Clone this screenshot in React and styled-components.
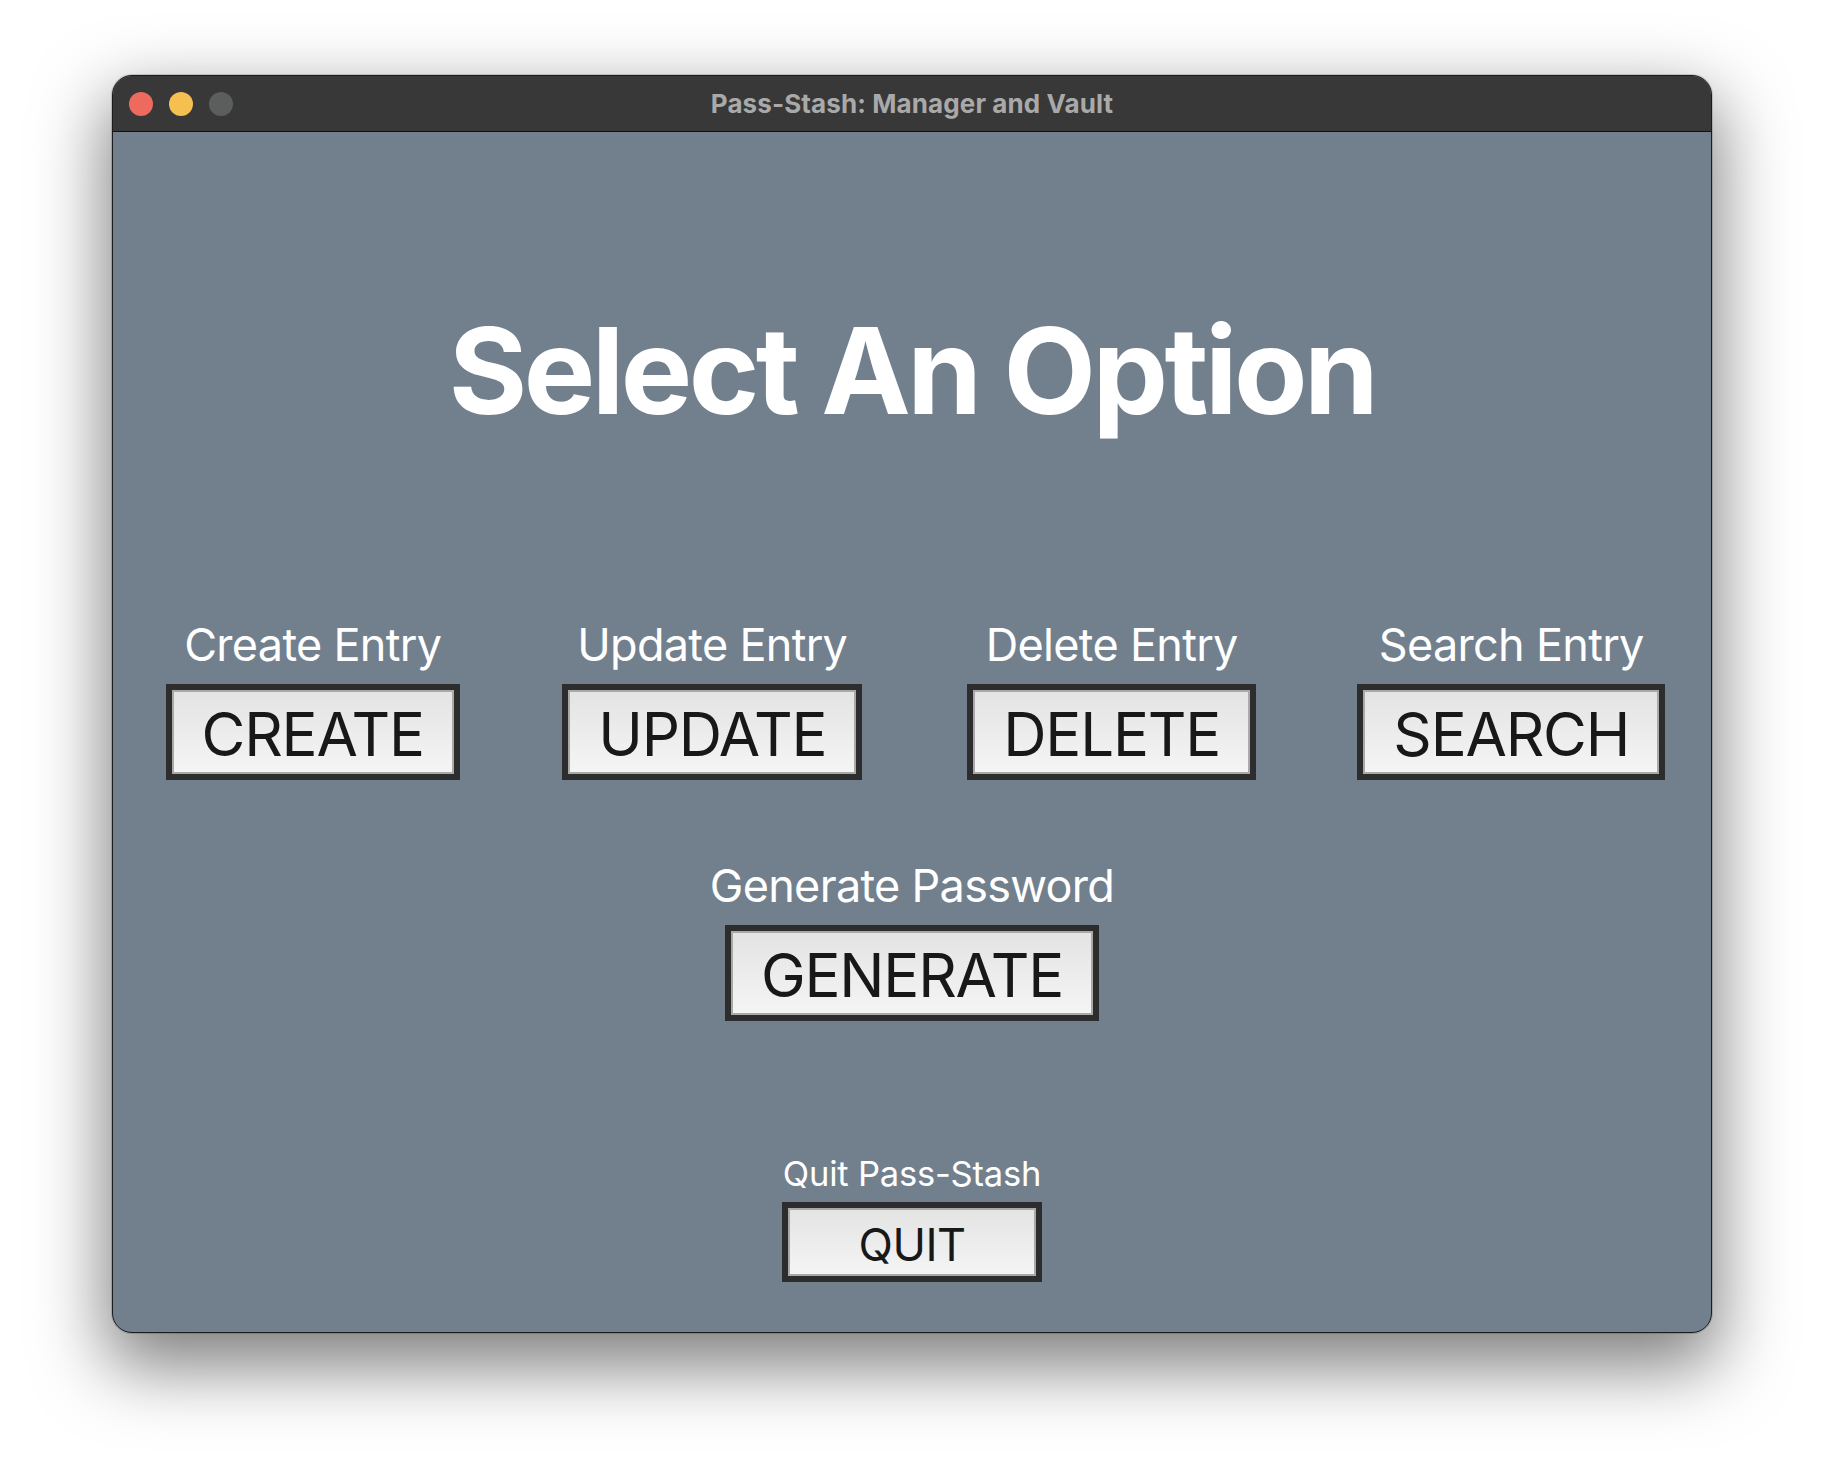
import React from "react";
import styled, { createGlobalStyle } from "styled-components";

const Global = createGlobalStyle`
    html, body{
        margin: 0;
        padding: 0;
        background: #ffffff;
    }
    #root{
        padding: 75px 112px 148px;
        font-family: "Inter", "Noto Sans", "Liberation Sans", sans-serif;
    }
`

const options = [
    {label: "Create Entry", action: "CREATE"},
    {label: "Update Entry", action: "UPDATE"},
    {label: "Delete Entry", action: "DELETE"},
    {label: "Search Entry", action: "SEARCH"},
];

const App = () => {
    return(
        <>
            <Global />
            <Window>
                <TitleBar>
                    <Lights>
                        <Light color="#ee6a5f" />
                        <Light color="#f5c04f" />
                        <Light color="#5c5e5d" />
                    </Lights>
                    <Title>Pass-Stash: Manager and Vault</Title>
                </TitleBar>
                <Content>
                    <Heading>Select An Option</Heading>
                    <OptionRow>
                        {options.map((o) => (
                            <Option key={o.action}>
                                <Label>{o.label}</Label>
                                <Button>{o.action}</Button>
                            </Option>
                        ))}
                    </OptionRow>
                    <Option gap="79px">
                        <Label>Generate Password</Label>
                        <Button>GENERATE</Button>
                    </Option>
                    <Option gap="132px">
                        <Label small>Quit Pass-Stash</Label>
                        <Button small>QUIT</Button>
                    </Option>
                </Content>
            </Window>
        </>
    )
}

export default App;

const Window = styled.div`
    width: 1600px;
    border-radius: 20px;
    overflow: hidden;
    border: 1px solid #1c1c1c;
    box-sizing: border-box;
    background-color: #72808e;
    box-shadow: 0 28px 70px 6px rgba(0, 0, 0, 0.5), 0 0 0 1px rgba(0, 0, 0, 0.15);
`

const TitleBar = styled.div`
    position: relative;
    height: 55px;
    background-color: #383838;
    border-bottom: 1px solid #111;
    display: flex;
    align-items: center;
    justify-content: center;
`

const Lights = styled.div`
    position: absolute;
    left: 16px;
    top: 16px;
    display: flex;
    gap: 16px;
`

const Light = styled.span`
    display: block;
    width: 24px;
    height: 24px;
    border-radius: 50%;
    background-color: ${(p) => p.color};
`

const Title = styled.div`
    color: #a9a9a9;
    font-size: 26px;
    font-weight: 700;
    letter-spacing: 0.1px;
`

const Content = styled.div`
    height: 1200px;
    box-sizing: border-box;
    padding-top: 166px;
    display: flex;
    flex-direction: column;
    align-items: center;
    color: #fff;
`

const Heading = styled.h1`
    margin: 0;
    font-size: 120px;
    line-height: 145px;
    font-weight: 700;
    letter-spacing: -3.5px;
`

const OptionRow = styled.div`
    width: 100%;
    margin-top: 175px;
    display: grid;
    grid-template-columns: repeat(4, 1fr);
`

const Option = styled.div`
    display: flex;
    flex-direction: column;
    align-items: center;
    margin-top: ${(p) => p.gap || "0"};
`

const Label = styled.div`
    font-size: ${(p) => (p.small ? "34.5px" : "45px")};
    line-height: ${(p) => (p.small ? "41px" : "54px")};
    font-weight: 400;
    letter-spacing: ${(p) => (p.small ? "-0.2px" : "-0.7px")};
    margin-bottom: ${(p) => (p.small ? "8px" : "12px")};
`

const Button = styled.button`
    box-sizing: border-box;
    height: ${(p) => (p.small ? "80px" : "96px")};
    min-width: ${(p) => (p.small ? "260px" : "0")};
    padding: ${(p) => (p.small ? "4px 0 0" : "4px 30px 0")};
    border: 6px solid #2d2d2d;
    box-shadow: inset 0 0 0 2px #a9a9a9;
    background: linear-gradient(#e3e3e3, #f5f5f5);
    color: #181818;
    font-family: "Inter", "Noto Sans", "Liberation Sans", sans-serif;
    font-size: ${(p) => (p.small ? "45px" : "60px")};
    font-weight: 400;
    letter-spacing: ${(p) => (p.small ? "-0.5px" : "-1.2px")};
    display: flex;
    align-items: center;
    justify-content: center;
    cursor: pointer;
`
